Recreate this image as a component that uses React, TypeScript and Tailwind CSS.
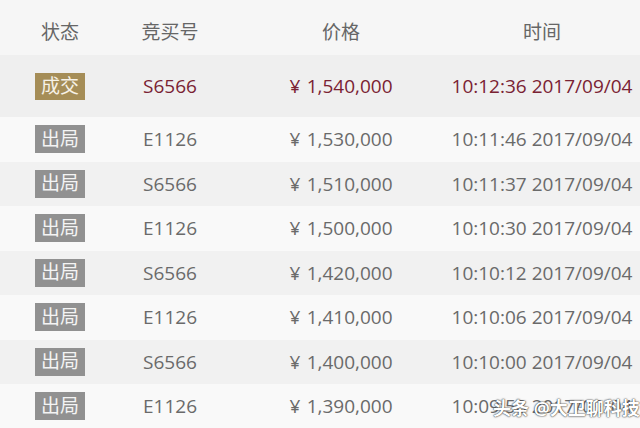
const rows = [
  { status: '出局', bidder: 'E1126', price: '1,530,000', time: '10:11:46 2017/09/04' },
  { status: '出局', bidder: 'S6566', price: '1,510,000', time: '10:11:37 2017/09/04' },
  { status: '出局', bidder: 'E1126', price: '1,500,000', time: '10:10:30 2017/09/04' },
  { status: '出局', bidder: 'S6566', price: '1,420,000', time: '10:10:12 2017/09/04' },
  { status: '出局', bidder: 'E1126', price: '1,410,000', time: '10:10:06 2017/09/04' },
  { status: '出局', bidder: 'S6566', price: '1,400,000', time: '10:10:00 2017/09/04' },
  { status: '出局', bidder: 'E1126', price: '1,390,000', time: '10:09:58 2017/09/04' },
];

const cols = 'grid grid-cols-[120px_100px_242px_160px]';
const cell = 'flex justify-center items-center whitespace-nowrap';

export default function App() {
  return (
    <div className="relative w-[640px] h-[428px] overflow-hidden bg-[#f9f9f9] font-['Open_Sans','Noto_Sans_CJK_SC',sans-serif] text-[19px] text-[#6a6a6a]">
      {/* Header */}
      <div className={`${cols} h-[55px] pt-[10px] bg-[#f6f6f6] text-[#666]`}>
        <div className={cell}>状态</div>
        <div className={cell}>竞买号</div>
        <div className={cell}>价格</div>
        <div className={cell}>时间</div>
      </div>

      {/* Winning bid */}
      <div className={`${cols} h-[62px] bg-[#efefef] text-[#7a2233]`}>
        <div className={cell}>
          <span className="w-[50px] h-[27px] flex items-center justify-center bg-[#a58d57] text-[#f6f1e6] leading-none">成交</span>
        </div>
        <div className={cell}>S6566</div>
        <div className={cell}>¥&thinsp;&thinsp;1,540,000</div>
        <div className={cell}>10:12:36 2017/09/04</div>
      </div>

      {rows.map((r, i) => (
        <div key={i} className={`${cols} h-[44.5px] ${i % 2 === 0 ? 'bg-[#f9f9f9]' : 'bg-[#f1f1f1]'}`}>
          <div className={cell}>
            <span className="w-[50px] h-[28px] flex items-center justify-center bg-[#919191] text-[#f4f4f4] leading-none">{r.status}</span>
          </div>
          <div className={cell}>{r.bidder}</div>
          <div className={cell}>¥&thinsp;&thinsp;{r.price}</div>
          <div className={cell}>{r.time}</div>
        </div>
      ))}

      {/* Watermark */}
      <div className="absolute left-[493px] top-[395px] text-[18px] text-white font-bold [text-shadow:0_0_2px_#444,0_0_1px_#222] whitespace-nowrap">
        头条 @大卫聊科技
      </div>
    </div>
  );
}
